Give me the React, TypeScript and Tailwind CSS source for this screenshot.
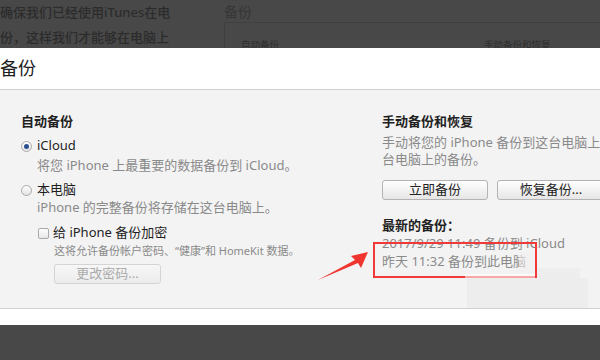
import React from "react";

const font = { fontFamily: '"Noto Sans", "Noto Sans CJK SC", sans-serif' };

function Radio({ checked }: { checked?: boolean }) {
  return (
    <span className="flex h-[11px] w-[11px] items-center justify-center rounded-full border border-[#a9a9a9] bg-gradient-to-b from-[#fdfdfd] to-[#e4e4e4]">
      {checked && <span className="h-[5px] w-[5px] rounded-full bg-[#2c4f8f]" />}
    </span>
  );
}

function Btn({ children, disabled, className = "" }: { children: React.ReactNode; disabled?: boolean; className?: string }) {
  return (
    <div
      className={
        "flex h-[20px] items-center justify-center rounded-[3px] border text-[13px] " +
        (disabled
          ? "border-[#d4d4d4] bg-gradient-to-b from-[#f7f7f7] to-[#ececec] text-[#ababab] "
          : "border-[#b3b3b3] bg-gradient-to-b from-[#ffffff] to-[#e6e6e6] text-[#222] ") +
        className
      }
    >
      {children}
    </div>
  );
}

export default function App() {
  return (
    <div className="relative h-[360px] w-[600px] overflow-hidden bg-white" style={font}>
      {/* dimmed background page */}
      <div className="flex h-[48px] overflow-hidden bg-[#484848]">
        <div className="w-[224px] text-[13px] font-medium leading-[25px] text-[#2c2c2c]">
          <div className="whitespace-nowrap">确保我们已经使用iTunes在电</div>
          <div className="whitespace-nowrap">份，这样我们才能够在电脑上</div>
        </div>
        <div className="flex-1">
          <div className="flex h-[22px] items-center text-[14px] text-[#363636]">备份</div>
          <div className="flex h-[26px] border-l border-t border-[#3f3f3f] pt-[16px] text-[9.5px] leading-[12px] text-[#2f2f2f]">
            <div className="w-[259px] pl-[16px]">自动备份</div>
            <div>手动备份和恢复</div>
          </div>
        </div>
      </div>

      {/* dialog header */}
      <div className="flex h-[42px] items-center border-b border-[#cfcfcf] bg-white text-[18px] text-[#1e1e1e]">
        备份
      </div>

      {/* panel */}
      <div className="flex h-[219px] border-b border-[#d2d2d2] bg-[#f3f3f3] pt-[23px]">
        <div className="flex w-[382px] shrink-0 flex-col pl-[21px] text-[13px]">
          <div className="flex h-[18px] items-center font-bold text-[#1f1f1f]">自动备份</div>
          <div className="mt-[6px] flex h-[18px] items-center gap-[5px] text-[#1f1f1f]">
            <Radio checked />
            <span>iCloud</span>
          </div>
          <div className="mt-[3px] flex h-[16px] items-center pl-[16px] whitespace-nowrap text-[#8a8a8a]">
            将您 iPhone 上最重要的数据备份到 iCloud。
          </div>
          <div className="mt-[7px] flex h-[18px] items-center gap-[5px] text-[#1f1f1f]">
            <Radio />
            <span>本电脑</span>
          </div>
          <div className="mt-[1px] flex h-[16px] items-center pl-[16px] whitespace-nowrap text-[#8a8a8a]">
            iPhone 的完整备份将存储在这台电脑上。
          </div>
          <div className="mt-[8px] flex h-[18px] items-center gap-[4px] pl-[17px] text-[#1f1f1f]">
            <span className="h-[11px] w-[11px] rounded-[2px] border border-[#a9a9a9] bg-gradient-to-b from-[#fdfdfd] to-[#e8e8e8]" />
            <span>给 iPhone 备份加密</span>
          </div>
          <div className="mt-[1px] flex h-[16px] items-center pl-[33px] whitespace-nowrap text-[11px] text-[#8a8a8a]">
            这将允许备份帐户密码、“健康”和 HomeKit 数据。
          </div>
          <div className="mt-[5px] pl-[33px]">
            <Btn disabled className="w-[107px]">更改密码...</Btn>
          </div>
        </div>

        <div className="flex min-w-0 flex-1 flex-col text-[13px]">
          <div className="flex h-[18px] items-center font-bold text-[#1f1f1f]">手动备份和恢复</div>
          <div className="mt-[3px] whitespace-nowrap leading-[17px] text-[#8a8a8a]">
            <div>手动将您的 iPhone 备份到这台电脑上或</div>
            <div>台电脑上的备份。</div>
          </div>
          <div className="mt-[12px] flex gap-[9px]">
            <Btn className="w-[106px] shrink-0">立即备份</Btn>
            <Btn className="w-[108px] shrink-0">恢复备份...</Btn>
          </div>
          <div className="mt-[17px] flex h-[18px] items-center font-bold text-[#1f1f1f]">最新的备份：</div>
          <div className="flex h-[18px] items-center whitespace-nowrap text-[#8a8a8a]">2017/9/29 11:49 备份到 iCloud</div>
          <div className="flex h-[18px] items-center whitespace-nowrap text-[#8a8a8a]">昨天 11:32 备份到此电脑</div>
        </div>
      </div>

      <div className="h-[16px] bg-white" />
      <div className="h-[35px] bg-[#484848]" />

      {/* annotation: red box */}
      <div className="absolute left-[373px] top-[242px] h-[36px] w-[164px] border-[2.5px] border-[#f03a3a]" />
      {/* watermark blotches */}
      <div className="absolute left-[519px] top-[253px] h-[20px] w-[16px] bg-[#f1efef]/60" />
      <div className="absolute left-[465px] top-[274px] h-[4px] w-[70px] bg-[#ffffff]/55" />
      <div className="absolute left-[537px] top-[268px] h-[10px] w-[43px] bg-[#eeeeee]" />
      <div className="absolute left-[467px] top-[278px] h-[30px] w-[121px] bg-[#ededed]" />

      {/* annotation: arrow */}
      <svg className="absolute left-0 top-0" width="600" height="360" viewBox="0 0 600 360">
        <polygon points="368,252 351,256 355,260 318,280 358,263 361,268" fill="#f0342f" />
      </svg>
    </div>
  );
}
